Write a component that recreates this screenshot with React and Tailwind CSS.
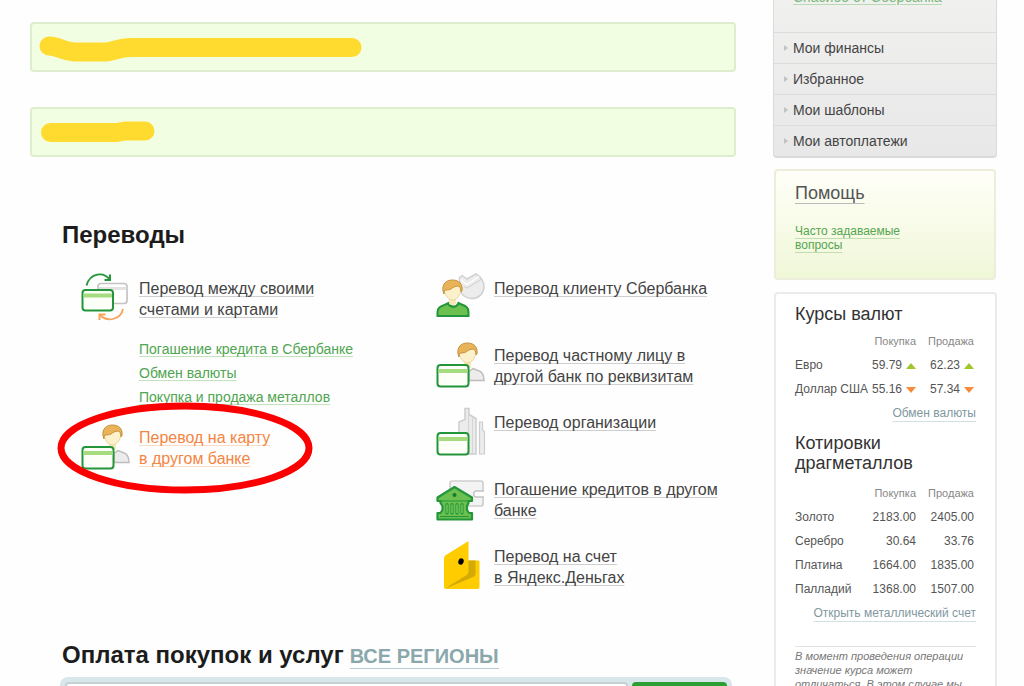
import React from "react";

const card = (y) => (
  <g>
    <rect x="1.5" y={y} width="31" height="21.500" rx="3" fill="#fcfff8" stroke="#23963b" strokeWidth="2" />
    <rect x="2.5" y={y + 4} width="29" height="4" fill="#a5dc80" />
  </g>
);

const Face = ({ x, y }) => (
  <g transform={`translate(${x} ${y})`}>
    <path d="M7 17v7c0 3 7 3 7 0v-7z" fill="#f8e8b4" />
    <path d="M2 9c0 6 4 12 8.500 12S19 15 19 9c0-3-3-6-8.500-6S2 6 2 9z" fill="#fcf1cb" stroke="#e8d5a0" strokeWidth="1" />
    <path d="M1 12C0 5 4 1 10.500 1S21 5 20 12l-1 1c0-2-.5-4-2-6-3 0-6 1-8 3-2 1-5 1-6 1-1 1-1 3-1 4z" fill="#e9b458" stroke="#c4923f" strokeWidth="1" />
  </g>
);

const greyBody = (
  <path d="M33 40.500h15c0-6-2-9-6-10l-5-2-4 3z" fill="#ececec" stroke="#bdbdbd" strokeWidth="1.500" />
);

function Icon({ children }) {
  return (
    <svg viewBox="0 0 50 50" className="h-[50px] w-[50px] shrink-0" fill="none" aria-hidden="true">
      {children}
    </svg>
  );
}

const OwnAccountsIcon = () => (
  <Icon>
    <rect x="17" y="10.500" width="29" height="20" rx="3" fill="#fff" stroke="#c4c4c4" strokeWidth="1.700" />
    <path d="M18 15.500h27.500" stroke="#e2e2e2" strokeWidth="3" />
    <rect x="1.500" y="17" width="30.500" height="20.500" rx="3" fill="#fcfff8" stroke="#23963b" strokeWidth="2" />
    <rect x="2.500" y="20.500" width="28.500" height="4" fill="#a5dc80" />
    <path d="M5.500 12.500C9 -.5 23 -1.500 28.500 6.500" stroke="#23963b" strokeWidth="1.800" />
    <path d="M23.500 7h5.500V1.500" stroke="#23963b" strokeWidth="2" />
    <path d="M42 36c-2 10-15 14-23 6" stroke="#f9a35a" strokeWidth="1.800" />
    <path d="M18.500 47V41.500h6" stroke="#f9a35a" strokeWidth="2" />
  </Icon>
);

const PersonCardIcon = () => (
  <Icon>
    {greyBody}
    <Face x={21} y={2} />
    {card(25)}
  </Icon>
);

const ClientIcon = () => (
  <Icon>
    <path d="M23.500 4.500l2.500-2 5 3.500L40 .8c5 3 8 8 8 13C48 21 42 25.500 36 25.500S25 22 24 16z" fill="#ececec" stroke="#d0d0d0" strokeWidth="1.500" strokeLinejoin="round" />
    <path d="M24.500 6.500l6.500 5 12-8" stroke="#fff" strokeWidth="1.500" />
    <path d="M28 13.500l3 1.500 14-8.500" stroke="#d0d0d0" strokeWidth="1" />
    <path d="M1.500 43v-4c0-5 4-6 9-8l2-1c3 5 8 5 10 0l2 1c5 2 8 3 8 8v4z" fill="#6cc04f" stroke="#23963b" strokeWidth="2" />
    <Face x={6} y={6} />
    <path d="M11.500 30c2 5 9 5 11 0" stroke="#23963b" strokeWidth="1.800" />
  </Icon>
);

const CompanyIcon = () => (
  <Icon>
    <path d="M23 47V15l6-2.500V1.500h4v6l7 4V47z" fill="#ececec" stroke="#cdcdcd" strokeWidth="1.500" />
    <path d="M32.500 8v39M36.500 10v37" stroke="#d6d6d6" strokeWidth="1.200" />
    <path d="M43.500 47V15h3v8l2 2v22z" fill="#ececec" stroke="#cdcdcd" strokeWidth="1.200" />
    {card(26)}
  </Icon>
);

const LoanIcon = () => (
  <Icon>
    <rect x="14" y="7" width="33" height="25" rx="2" fill="#f3f3f3" stroke="#cfcfcf" strokeWidth="1.700" />
    <path d="M48 17h-8c-3 0-3 6 0 6h8" fill="#fff" stroke="#c4c4c4" strokeWidth="1.500" />
    <path d="M18.500 13L36 23.500V27h-3.500v2l-1.500 3v4l2 3h3v6.500H1.500V39h3l2-3v-4L4.500 29v-2H1.500v-3.500z" fill="#6cc04f" stroke="#23963b" strokeWidth="2.200" strokeLinejoin="round" />
    <path d="M3 27h31M4 42.500h29" stroke="#23963b" strokeWidth="1.200" />
    <path d="M11 30.500v8.500M16 30.500v8.500M21 30.500v8.500M26 30.500v8.500" stroke="#23963b" strokeWidth="3.200" strokeLinecap="round" />
    <path d="M11 30.500v8.500M16 30.500v8.500M21 30.500v8.500M26 30.500v8.500" stroke="#7dcd60" strokeWidth="1.300" />
    <circle cx="18.500" cy="21" r="2" fill="#167a2c" />
  </Icon>
);

const WalletIcon = () => (
  <Icon>
    <path d="M8 45.500V29l24-9.500h10.500a1 1 0 011 1V46a2 2 0 01-2 2H10a2.500 2.500 0 01-2-2.500z" fill="#ffcc00" />
    <path d="M32 19.500h7.500v13c0 2-1 3-2.500 3.500L11 47z" fill="#d3aa06" />
    <path d="M10 14L32.500 0v30.500c0 2-1 3-2.500 4L9 47.500c-1-1-1-1-1-2.500V18c0-2 .5-3 2-4z" fill="#ffcc00" />
    <ellipse cx="25" cy="20.500" rx="2.600" ry="3.300" transform="rotate(20 25 20.500)" fill="#000" />
  </Icon>
);

function Transfer({ icon, accent, children }) {
  return (
    <div className="flex items-start gap-2">
      {icon}
      <a
        href="#transfer"
        className={
          accent
            ? "pt-[5px] text-base leading-[21px] text-[#f58542] underline decoration-[#fbdcc4] decoration-1 underline-offset-2 [text-decoration-skip-ink:none]"
            : "pt-[5px] text-base leading-[21px] text-[#444] underline decoration-[#cfcfcf] decoration-1 underline-offset-2 [text-decoration-skip-ink:none]"
        }
      >
        {children}
      </a>
    </div>
  );
}

function SubLink({ children }) {
  return (
    <li>
      <a href="#sub" className="text-[#4fa550] underline decoration-[#c3e2bd] decoration-1 underline-offset-2 [text-decoration-skip-ink:none]">
        {children}
      </a>
    </li>
  );
}

function Trend({ up }) {
  return (
    <svg viewBox="0 0 10 6" className="ml-1 inline-block h-[6px] w-[10px]" aria-hidden="true">
      {up ? <path d="M5 0l5 6H0z" fill="#9fc62b" /> : <path d="M0 0h10L5 6z" fill="#f98b3c" />}
    </svg>
  );
}

function RateTable({ rows, label }) {
  return (
    <table aria-label={label} className="w-full table-fixed text-right text-xs text-[#555]">
      <colgroup>
        <col />
        <col className="w-[48px]" />
        <col className="w-[58px]" />
      </colgroup>
      <thead>
        <tr className="h-6 text-[11px] text-[#888]">
          <td />
          <th scope="col" className="font-normal">Покупка</th>
          <th scope="col" className="font-normal">Продажа</th>
        </tr>
      </thead>
      <tbody>
        {rows.map(([name, buy, sell, trend]) => (
          <tr key={name} className="h-6">
            <th scope="row" className="whitespace-nowrap text-left font-normal">{name}</th>
            <td className="whitespace-nowrap">
              {buy}
              {trend && <Trend up={trend === "up"} />}
            </td>
            <td className="whitespace-nowrap">
              {sell}
              {trend && <Trend up={trend === "up"} />}
            </td>
          </tr>
        ))}
      </tbody>
    </table>
  );
}

const currencies = [
  ["Евро", "59.79", "62.23", "up"],
  ["Доллар США", "55.16", "57.34", "down"],
];

const metals = [
  ["Золото", "2183.00", "2405.00"],
  ["Серебро", "30.64", "33.76"],
  ["Платина", "1664.00", "1835.00"],
  ["Палладий", "1368.00", "1507.00"],
];

const menu = ["Мои финансы", "Избранное", "Мои шаблоны", "Мои автоплатежи"];

function Sidebar() {
  return (
    <aside className="-mt-4 w-[224px] shrink-0">
      <nav className="overflow-hidden rounded-b border border-b-2 border-[#dadada] bg-linear-to-b from-[#f1f1f0] to-[#e8e8e8]">
        <div className="h-[47px] px-[19px] text-sm leading-6">
          <a href="#bonus" className="text-[#7bb87a] underline decoration-[#b9d9b5] underline-offset-2">Спасибо от Сбербанка</a>
        </div>
        <ul>
          {menu.map((item) => (
            <li key={item} className="border-t border-[#dcdcdc]">
              <a href="#menu" className="flex h-[30px] items-center gap-[5px] pl-[10px] text-sm text-[#444]">
                <svg viewBox="0 0 4 6" className="h-[6px] w-[4px]" aria-hidden="true">
                  <path d="M0 0l4 3-4 3z" fill="#c2c2c2" />
                </svg>
                {item}
              </a>
            </li>
          ))}
        </ul>
      </nav>

      <section className="mt-[11px] mr-px ml-px h-[111px] rounded border-2 border-[#ecedda] bg-linear-to-b from-[#fffff8] to-[#f0f7d8] px-[19px] pt-[10px]">
        <h2 className="text-lg leading-6 text-[#555]">
          <a href="#help" className="underline decoration-[#bbb] decoration-1 underline-offset-4 [text-decoration-skip-ink:none]">Помощь</a>
        </h2>
        <p className="mt-[19px] text-xs leading-[14px]">
          <a href="#faq" className="text-[#55a552] underline decoration-[#c0deb0] decoration-1 underline-offset-3 [text-decoration-skip-ink:none]">
            Часто задаваемые
            <br />
            вопросы
          </a>
        </p>
      </section>

      <section className="mt-3 ml-px rounded border-2 border-[#ebebeb] bg-white px-[19px] pt-[10px]">
        <h2 className="text-lg leading-5 text-[#333]">Курсы валют</h2>
        <div className="mt-[5px] pr-[2px]">
          <RateTable rows={currencies} label="Курсы валют" />
        </div>
        <p className="text-right text-xs leading-6">
          <a href="#exchange" className="text-[#7f989f] underline decoration-[#d3dfe1] decoration-1 underline-offset-4 [text-decoration-skip-ink:none]">Обмен валюты</a>
        </p>
        <h2 className="mt-2 text-lg leading-5 text-[#333]">
          Котировки
          <br />
          драгметаллов
        </h2>
        <div className="mt-2 pr-[2px]">
          <RateTable rows={metals} label="Котировки драгметаллов" />
        </div>
        <p className="whitespace-nowrap text-right text-xs leading-6">
          <a href="#metal" className="text-[#7f989f] underline decoration-[#d3dfe1] decoration-1 underline-offset-4 [text-decoration-skip-ink:none]">Открыть металлический счет</a>
        </p>
        <p className="mt-[21px] border-t border-[#e2e2e2] pt-[2px] text-[11px] leading-[14px] text-[#777] italic">
          В момент проведения операции
          <br />
          значение курса может
          <br />
          отличаться. В этом случае мы
        </p>
      </section>
    </aside>
  );
}

export default function App() {
  return (
    <div className="flex h-screen items-start gap-[37px] overflow-hidden bg-[#fefefe] pr-[27px] pl-[30px] font-['Liberation_Sans',Arial,sans-serif]">
      <main className="min-w-0 flex-1 pt-[22px]">
        <div className="flex flex-col gap-[35px]">
          <div className="h-[50px] rounded border-2 border-[#dfedcf] bg-[#f1fee2]">
            <svg viewBox="0 0 340 46" className="h-[46px] w-[340px]" fill="none" aria-hidden="true">
              <path d="M17 22c9 0 15 6 27 6h28c9 0 14-4.500 27-4.500h221" stroke="#ffdb2f" strokeWidth="19" strokeLinecap="round" strokeLinejoin="round" />
            </svg>
          </div>
          <div className="h-[50px] rounded border-2 border-[#dfedcf] bg-[#f1fee2]">
            <svg viewBox="0 0 340 46" className="h-[46px] w-[340px]" fill="none" aria-hidden="true">
              <path d="M18.500 23.500H85l8-1.500h20" stroke="#ffdb2f" strokeWidth="19" strokeLinecap="round" strokeLinejoin="round" />
            </svg>
          </div>
        </div>

        <h1 className="mt-[62px] ml-8 text-2xl leading-8 font-bold text-[#1c1c1c]">Переводы</h1>

        <div className="mt-[22px] grid grid-cols-2 gap-x-[55px] pl-[51px]">
          <div>
            <Transfer icon={<OwnAccountsIcon />}>
              Перевод между своими
              <br />
              счетами и картами
            </Transfer>
            <ul className="mt-[14px] mb-[13px] pl-[58px] text-sm leading-6 whitespace-nowrap">
              <SubLink>Погашение кредита в Сбербанке</SubLink>
              <SubLink>Обмен валюты</SubLink>
              <SubLink>Покупка и продажа металлов</SubLink>
            </ul>
            <div className="relative">
              <Transfer icon={<PersonCardIcon />} accent>
                Перевод на карту
                <br />в другом банке
              </Transfer>
              <svg viewBox="0 0 256 92" className="pointer-events-none absolute -top-5 -left-6 h-[92px] w-[256px]" aria-hidden="true">
                <ellipse cx="128" cy="46" rx="124" ry="42" fill="none" stroke="#fb0000" strokeWidth="7" />
              </svg>
            </div>
          </div>

          <div className="flex flex-col gap-[17px]">
            <Transfer icon={<ClientIcon />}>Перевод клиенту Сбербанка</Transfer>
            <Transfer icon={<PersonCardIcon />}>
              Перевод частному лицу в<br />
              другой банк по реквизитам
            </Transfer>
            <Transfer icon={<CompanyIcon />}>Перевод организации</Transfer>
            <Transfer icon={<LoanIcon />}>
              Погашение кредитов в другом
              <br />
              банке
            </Transfer>
            <Transfer icon={<WalletIcon />}>
              Перевод на счет
              <br />в Яндекс.Деньгах
            </Transfer>
          </div>
        </div>

        <h2 className="mt-12 ml-8 flex items-baseline gap-[6px] text-2xl leading-8 font-bold whitespace-nowrap text-[#1c1c1c]">
          Оплата покупок и услуг
          <a href="#regions" className="border-b border-[#b5cdd1] text-xl leading-6 text-[#8aa8ac]">ВСЕ РЕГИОНЫ</a>
        </h2>
        <form className="mt-[6px] mr-1 ml-[30px] flex gap-1 rounded-lg bg-[#d7e7ea] p-[5px]">
          <input type="search" aria-label="Поиск услуг" className="h-8 min-w-0 flex-1 rounded border-2 border-[#c5d2d5] bg-white px-2" />
          <button type="submit" aria-label="Найти" className="h-8 w-[95px] rounded bg-[#2b9f33]" />
        </form>
      </main>
      <Sidebar />
    </div>
  );
}
